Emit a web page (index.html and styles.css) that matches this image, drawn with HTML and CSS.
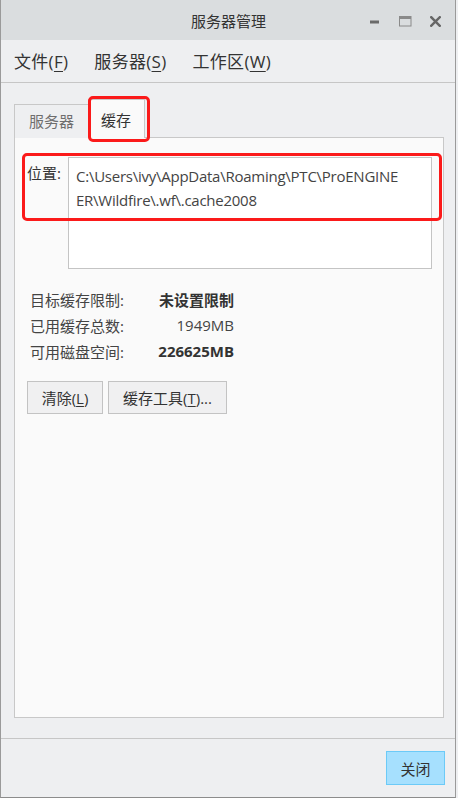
FILE: index.html
```html
<!DOCTYPE html>
<html lang="zh-CN">
<head>
<meta charset="utf-8">
<title>服务器管理</title>
<link rel="stylesheet" href="styles.css">
</head>
<body>
<div class="window">
  <div class="titlebar">
    <div></div>
    <div class="title">服务器管理</div>
    <div class="controls">
      <span class="ctl"><svg width="10" height="4" viewBox="0 0 10 4"><rect x="0" y="0.5" width="9" height="3" fill="#6a6a6a"/></svg></span>
      <span class="ctl"><svg width="13" height="11" viewBox="0 0 13 11"><rect x="0.5" y="0.5" width="11.5" height="9.5" fill="none" stroke="#8a8a8a" stroke-width="1"/><rect x="0.5" y="0.5" width="11.5" height="2.5" fill="#8a8a8a"/></svg></span>
      <span class="ctl"><svg width="11" height="11" viewBox="0 0 11 11"><path d="M1.2 1.2 L9.8 9.8 M9.8 1.2 L1.2 9.8" stroke="#666" stroke-width="2.4" stroke-linecap="square"/></svg></span>
    </div>
  </div>
  <div class="menubar">
    <span class="menu">文件(<u>F</u>)</span>
    <span class="menu">服务器(<u>S</u>)</span>
    <span class="menu">工作区(<u>W</u>)</span>
  </div>
  <div class="content">
    <div class="tabs">
      <div class="tab">服务器</div>
      <div class="tab active">缓存<span class="mark mark-tab"></span></div>
    </div>
    <div class="panel">
      <div class="loc">
        <span class="mark mark-loc"></span>
        <div class="loc-label">位置:</div>
        <div class="loc-box">
          <div class="loc-line">C:\Users\ivy\AppData\Roaming\PTC\ProENGINE</div>
          <div class="loc-line">ER\Wildfire\.wf\.cache2008</div>
        </div>
      </div>
      <div class="stats">
        <div class="s-label">目标缓存限制:</div><div class="s-value bold">未设置限制</div>
        <div class="s-label">已用缓存总数:</div><div class="s-value">1949MB</div>
        <div class="s-label">可用磁盘空间:</div><div class="s-value bold">226625MB</div>
      </div>
      <div class="btns">
        <button class="btn btn-clear">清除(<u>L</u>)</button>
        <button class="btn btn-tools">缓存工具(<u>T</u>)...</button>
      </div>
    </div>
  </div>
  <div class="footer">
    <button class="close">关闭</button>
  </div>
</div>
</body>
</html>
```

FILE: styles.css
```css
* { box-sizing: border-box; }
html, body { margin: 0; padding: 0; }
body {
  background: #eeeff1;
  font-family: "Open Sans", "Noto Sans CJK SC", sans-serif;
  color: #333;
  width: 458px;
  height: 798px;
  overflow: hidden;
}
.window {
  width: 456px;
  height: 798px;
  border-left: 1px solid #9a9a9a;
  border-right: 1px solid #9a9a9a;
  border-bottom: 1px solid #8c8c8c;
  background: #eeeff1;
  display: flex;
  flex-direction: column;
}
.titlebar {
  height: 40px;
  flex: none;
  background: #dadddf;
  display: grid;
  grid-template-columns: 1fr auto 1fr;
  align-items: center;
}
.title {
  font-size: 15px;
  color: #333;
  line-height: 20px;
  padding-top: 2px;
  padding-left: 1px;
}
.controls {
  justify-self: end;
  display: flex;
  padding-right: 5px;
  padding-top: 3px;
}
.ctl {
  width: 30px;
  height: 20px;
  display: flex;
  align-items: center;
  justify-content: center;
}
.menubar {
  height: 43px;
  flex: none;
  border-bottom: 1px solid #c6c6c6;
  display: flex;
  align-items: center;
  gap: 26px;
  padding-left: 13px;
  padding-top: 1px;
}
.menu {
  font-size: 17px;
  color: #333;
  line-height: 24px;
  letter-spacing: 0.3px;
}
.menu u { text-underline-offset: 3px; text-decoration-thickness: 1px; }
.content {
  flex: 1;
  display: flex;
  flex-direction: column;
  padding: 16px 11px 20px 13px;
}
.tabs {
  display: flex;
  align-items: flex-end;
  height: 39px;
  margin-bottom: -1px;
  position: relative;
  z-index: 1;
}
.tab {
  font-size: 15px;
  line-height: 20px;
  position: relative;
}
.tab:not(.active) {
  height: 34px;
  width: 74px;
  padding: 6px 0 0 14px;
  color: #6e6e6e;
  background: #eeeff1;
  border: 1px solid #c8c8c8;
  border-bottom: none;
  border-right: none;
}
.tab.active {
  height: 39px;
  width: 57px;
  padding: 10px 0 0 12px;
  color: #333;
  background: #fafafa;
  border: 1px solid #c8c8c8;
  border-bottom: none;
}
.mark {
  position: absolute;
  border: 3px solid #fb1a1a;
  border-radius: 5px;
  pointer-events: none;
}
.mark-tab {
  left: -1px;
  top: -4px;
  right: -6px;
  bottom: -4px;
}
.panel {
  flex: 1;
  background: #fafafa;
  border: 1px solid #c8c8c8;
  padding: 19px 11px 0 12px;
}
.loc {
  display: flex;
  position: relative;
}
.mark-loc {
  left: -5px;
  top: -4px;
  right: -10px;
  height: 68px;
}
.loc-label {
  width: 41px;
  flex: none;
  font-size: 15px;
  line-height: 20px;
  padding-top: 6px;
  color: #333;
}
.loc-box {
  width: 364px;
  height: 112px;
  background: #ffffff;
  border: 1px solid #c4c4c4;
  padding: 6px 0 0 7px;
}
.loc-line {
  font-size: 15px;
  line-height: 24px;
  color: #444;
  white-space: nowrap;
  letter-spacing: -0.25px;
}
.stats {
  display: grid;
  grid-template-columns: 130px 74px;
  grid-auto-rows: 26px;
  align-items: center;
  margin: 17px 0 0 3px;
  font-size: 15px;
}
.s-label { color: #444; }
.s-value { justify-self: end; color: #444; white-space: nowrap; }
.s-value.bold { font-weight: 700; color: #333; }
.btns {
  display: flex;
  gap: 5px;
  margin-top: 17px;
}
.btn {
  height: 33px;
  font-family: inherit;
  font-size: 15px;
  color: #333;
  background: #f0f0f1;
  border: 1px solid #c3c3c3;
  border-radius: 0;
  padding: 0;
  line-height: 20px;
}
.btn u { text-underline-offset: 2px; }
.btn-clear { width: 76px; }
.btn-tools { width: 119px; }
.footer {
  height: 59px;
  flex: none;
  border-top: 1px solid #c6c6c6;
  display: flex;
  justify-content: flex-end;
  align-items: flex-start;
  padding: 12px 10px 0 0;
}
.close {
  width: 59px;
  height: 34px;
  font-family: inherit;
  font-size: 15px;
  color: #333;
  background: #a6e0fe;
  border: 1px solid #6ccaf7;
  border-radius: 0;
  padding: 0;
}
```
